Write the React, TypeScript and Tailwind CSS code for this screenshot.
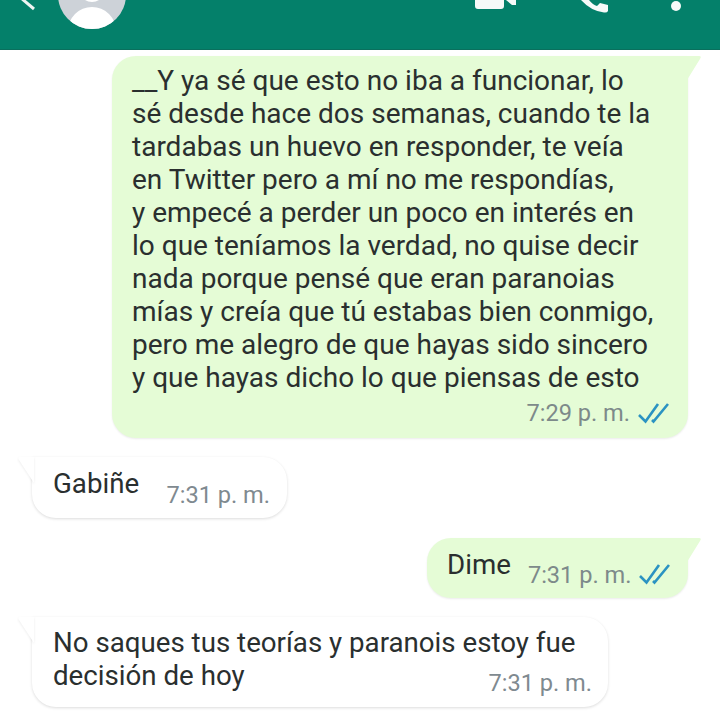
import { FC, ReactNode } from "react";

const LINES = [
  "__Y ya sé que esto no iba a funcionar, lo",
  "sé desde hace dos semanas, cuando te la",
  "tardabas un huevo en responder, te veía",
  "en Twitter pero a mí no me respondías,",
  "y empecé a perder un poco en interés en",
  "lo que teníamos la verdad, no quise decir",
  "nada porque pensé que eran paranoias",
  "mías y creía que tú estabas bien conmigo,",
  "pero me alegro de que hayas sido sincero",
  "y que hayas dicho lo que piensas de esto",
];

const DoubleCheck: FC = () => (
  <svg viewBox="0 0 32 22" className="w-[32px] h-[22px] shrink-0 text-[#2b93c2]" fill="none" stroke="currentColor" strokeWidth={2.6}>
    <path d="M1 13l6.5 6.5L20 2" />
    <path d="M14 18l1.5 1.5L30 2" />
  </svg>
);

const Tail: FC<{ side: "left" | "right"; fill: string }> = ({ side, fill }) =>
  side === "right" ? (
    <svg viewBox="0 0 16 24" className="absolute top-0 right-[-14px] w-[16px] h-[24px]">
      <path d="M0 0h13q3 0 1 3L1 24H0z" fill={fill} />
    </svg>
  ) : (
    <svg viewBox="0 0 16 26" className="absolute top-0 left-[-14px] w-[16px] h-[26px] drop-shadow-[0_1px_1px_rgba(0,0,0,0.08)]">
      <path d="M16 0H3Q-1 0 1 3l15 23z" fill={fill} />
    </svg>
  );

const Outgoing: FC<{ children: ReactNode; className: string }> = ({ children, className }) => (
  <div className={`relative self-end mr-[32px] bg-[#e5fcd6] rounded-[24px] rounded-tr-none shadow-[0_1px_2px_rgba(0,0,0,0.08)] ${className}`}>
    <Tail side="right" fill="#e5fcd6" />
    {children}
  </div>
);

const Incoming: FC<{ children: ReactNode; className: string }> = ({ children, className }) => (
  <div className={`relative self-start ml-[32px] bg-white rounded-[24px] rounded-tl-none shadow-[0_1px_3px_rgba(0,0,0,0.14)] ${className}`}>
    <Tail side="left" fill="#ffffff" />
    {children}
  </div>
);

export default function App() {
  return (
    <div className="w-[720px] h-[720px] overflow-hidden bg-white flex flex-col font-['Roboto',sans-serif] text-[27.7px] leading-[33px] text-[#2a2f2f]">
      {/* Header, cut off by the top of the photo */}
      <header className="h-[50px] shrink-0 bg-[#04806a] border-b border-[#0a6f5d] flex items-start overflow-hidden text-white">
        <svg viewBox="0 0 16 12" className="w-[16px] h-[12px] ml-[20px] shrink-0" fill="none" stroke="#eef5f3" strokeWidth={3}>
          <path d="M1 -2L14 9" />
        </svg>
        <div className="relative ml-[22px] mt-[-39px] w-[68px] h-[68px] rounded-full bg-[#cdd2d8] overflow-hidden shrink-0">
          <div className="absolute left-[10px] top-[46px] w-[48px] h-[48px] rounded-full bg-white" />
          <div className="absolute left-[21px] top-[15px] w-[26px] h-[26px] rounded-full bg-white" />
        </div>
        <span className="ml-[21px] mt-[-24px] text-[27px] leading-[30px] text-[#e8f2f0]">Chris</span>
        <div className="ml-auto flex items-start">
          <svg viewBox="0 0 41 9" className="w-[41px] h-[9px] mr-[65px]" fill="#f6faf9">
            <path d="M0 0h29v6q0 3-3 3H3q-3 0-3-3zM31 0h10v5l-4 0z" />
          </svg>
          <svg viewBox="0 0 27 13" className="w-[27px] h-[13px] mr-[63px]" fill="#f6faf9">
            <path d="M0 0H8Q12 5 16 6L19 3L27 5V11Q26 13 23 12.5Q10 11 0 0z" />
          </svg>
          <div className="w-[10px] h-[10px] rounded-full bg-[#f6faf9] mt-[1px] mr-[39px]" />
        </div>
      </header>

      <main className="flex-1 flex flex-col pt-[6px]">
        <Outgoing className="w-[576px] h-[382px] pl-[20px] pt-[8px] text-[28px]">
          {LINES.map((line) => (
            <div key={line} className="whitespace-nowrap">{line}</div>
          ))}
          <div className="flex items-center justify-end mt-[4px] pr-[18px] gap-[8px]">
            <span className="text-[23.6px] leading-[30px] text-[#7d8a8a]">7:29 p. m.</span>
            <DoubleCheck />
          </div>
        </Outgoing>

        <Incoming className="mt-[19px] w-[255px] h-[61px] pl-[21px] pr-[17px] flex justify-between">
          <span className="mt-[10px]">Gabiñe</span>
          <span className="mt-[23px] whitespace-nowrap text-[23.6px] leading-[30px] text-[#7f8a90]">7:31 p. m.</span>
        </Incoming>

        <Outgoing className="mt-[20px] w-[261px] h-[60px] pl-[20px] pr-[18px] flex">
          <span className="mt-[10px]">Dime</span>
          <span className="ml-[17px] mt-[22px] whitespace-nowrap text-[23.6px] leading-[30px] text-[#7d8a8a]">7:31 p. m.</span>
          <div className="ml-[8px] mt-[25px]"><DoubleCheck /></div>
        </Outgoing>

        <Incoming className="mt-[19px] w-[576px] h-[90px] pl-[21px] pr-[16px] pt-[9px]">
          <div className="whitespace-nowrap">No saques tus teorías y paranois estoy fue</div>
          <div className="flex justify-between">
            <span>decisión de hoy</span>
            <span className="mt-[9px] whitespace-nowrap text-[23.6px] leading-[30px] text-[#7f8a90]">7:31 p. m.</span>
          </div>
        </Incoming>
      </main>
    </div>
  );
}
